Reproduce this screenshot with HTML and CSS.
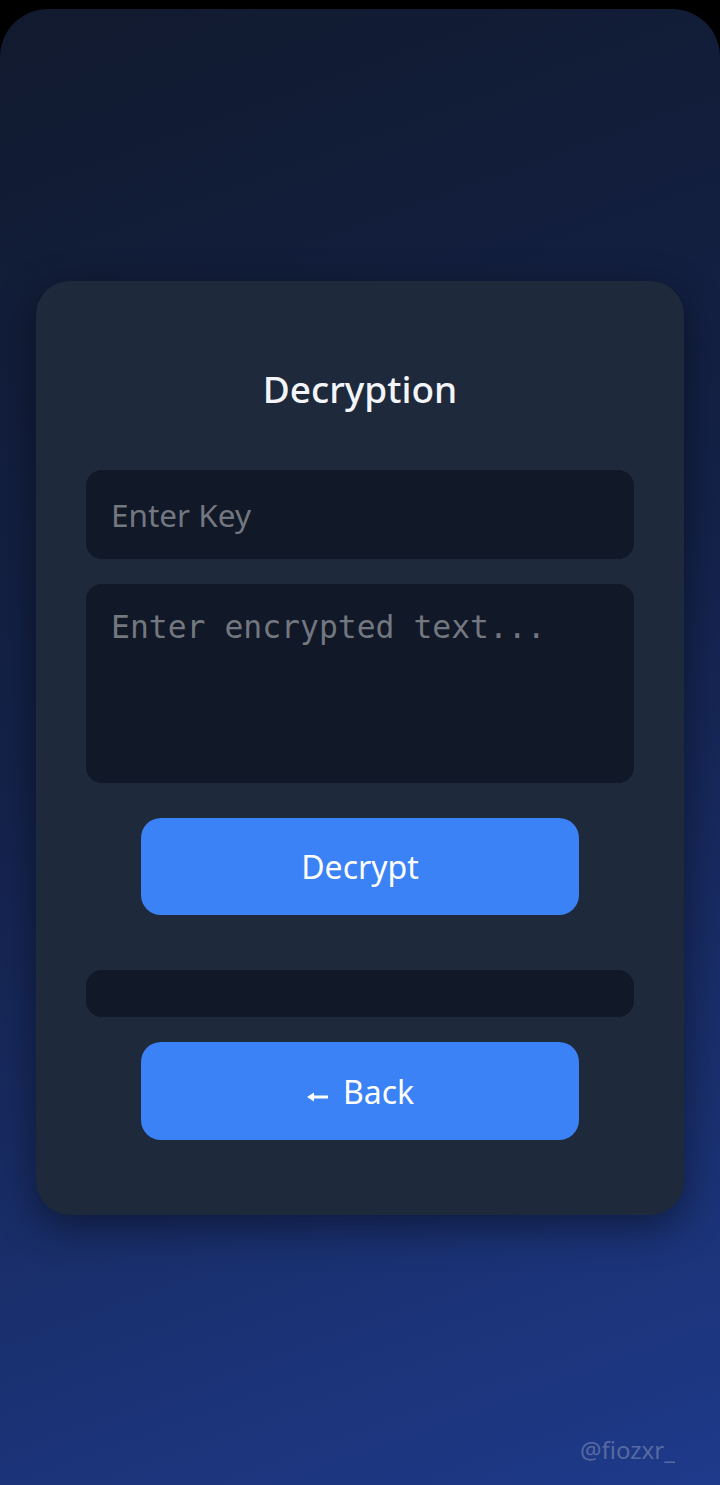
FILE: index.html
```html
<!DOCTYPE html>
<html lang="en">
<head>
<meta charset="utf-8">
<title>Decryption</title>
<link rel="stylesheet" href="styles.css">
</head>
<body>
<div class="screen">
  <main class="card">
    <h1 class="title">Decryption</h1>
    <input class="field key" type="text" placeholder="Enter Key">
    <textarea class="field text" placeholder="Enter encrypted text..."></textarea>
    <button class="btn decrypt">Decrypt</button>
    <div class="result"></div>
    <button class="btn back"><svg class="arrow" width="21" height="10" viewBox="0 0 21 10" aria-hidden="true"><path d="M0 5 L7 0.5 L7 3.6 L21 3.6 L21 6.4 L7 6.4 L7 9.5 Z" fill="#fff"/></svg><span>Back</span></button>
  </main>
  <div class="watermark">@fiozxr_</div>
</div>
</body>
</html>
```
FILE: styles.css
```css
* { box-sizing: border-box; }
html, body { margin: 0; padding: 0; background: #000; }
body { font-family: "Noto Sans", "Open Sans", sans-serif; }

.screen {
  margin-top: 9px;
  height: 1476px;
  border-radius: 48px 48px 0 0;
  background: linear-gradient(160deg, #111a2e 0%, #14224a 45%, #1e3a8a 100%);
  position: relative;
  display: flex;
  flex-direction: column;
  align-items: center;
  padding-top: 272px;
}

.card {
  width: 648px;
  background: #1e293b;
  border-radius: 34px;
  padding: 50px 50px 75px;
  box-shadow: 0 12px 40px rgba(0, 0, 0, 0.45);
  display: flex;
  flex-direction: column;
  align-items: center;
}

.title {
  margin: 36px 0 60px;
  font-size: 37px;
  line-height: 43px;
  font-weight: 500;
  color: #f3f5fa;
}

.field {
  width: 100%;
  background: #111827;
  border: none;
  border-radius: 16px;
  color: #e5e7eb;
  outline: none;
  padding: 0 25px;
}
.field::placeholder { color: #73777f; }

.key {
  height: 89px;
  font-family: "Noto Sans", sans-serif;
  font-size: 31.5px;
}

.text {
  margin-top: 25px;
  height: 199px;
  resize: none;
  padding-top: 23px;
  font-family: "DejaVu Sans Mono", monospace;
  font-size: 31.4px;
  line-height: 40px;
}

.btn {
  width: 438px;
  height: 97px;
  border: none;
  border-radius: 20px;
  background: #3b82f6;
  color: #fff;
  font-family: "Noto Sans", sans-serif;
  font-size: 32px;
  display: flex;
  align-items: center;
  justify-content: center;
}

.decrypt { margin-top: 35px; }

.result {
  width: 100%;
  height: 47px;
  margin-top: 55px;
  background: #111827;
  border-radius: 16px;
}

.back { margin-top: 25px; height: 98px; padding-left: 7px; }
.arrow { margin: 12px 15px 0 0; }

.watermark {
  position: absolute;
  left: 580px;
  top: 1424px;
  font-size: 24px;
  color: rgba(160, 170, 200, 0.45);
}
```
